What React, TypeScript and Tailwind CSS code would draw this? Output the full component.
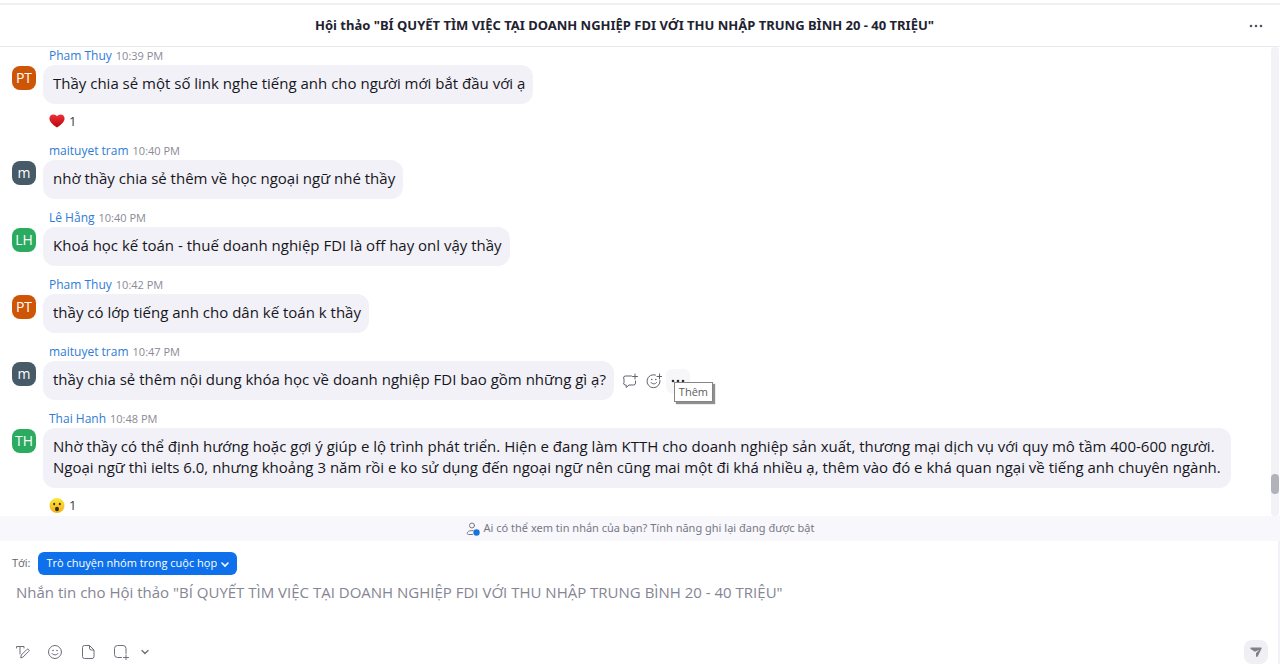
import React from 'react';

type Message = {
  name: string;
  time: string;
  initials: string;
  color: string;
  text: string;
  reaction?: 'heart' | 'wow';
  active?: boolean;
};

const messages: Message[] = [
  {
    name: 'Pham Thuy',
    time: '10:39 PM',
    initials: 'PT',
    color: 'bg-[#cf5506]',
    text: 'Thầy chia sẻ một số link nghe tiếng anh cho người mới bắt đầu với ạ',
    reaction: 'heart',
  },
  {
    name: 'maituyet tram',
    time: '10:40 PM',
    initials: 'm',
    color: 'bg-[#475a68]',
    text: 'nhờ thầy chia sẻ thêm về học ngoại ngữ nhé thầy',
  },
  {
    name: 'Lê Hằng',
    time: '10:40 PM',
    initials: 'LH',
    color: 'bg-[#2bab60]',
    text: 'Khoá học kế toán - thuế doanh nghiệp FDI là off hay onl vậy thầy',
  },
  {
    name: 'Pham Thuy',
    time: '10:42 PM',
    initials: 'PT',
    color: 'bg-[#cf5506]',
    text: 'thầy có lớp tiếng anh cho dân kế toán k thầy',
  },
  {
    name: 'maituyet tram',
    time: '10:47 PM',
    initials: 'm',
    color: 'bg-[#475a68]',
    text: 'thầy chia sẻ thêm nội dung khóa học về doanh nghiệp FDI bao gồm những gì ạ?',
    active: true,
  },
  {
    name: 'Thai Hanh',
    time: '10:48 PM',
    initials: 'TH',
    color: 'bg-[#2bab60]',
    text: 'Nhờ thầy có thể định hướng hoặc gợi ý giúp e lộ trình phát triển. Hiện e đang làm KTTH cho doanh nghiệp sản xuất, thương mại dịch vụ với quy mô tầm 400-600 người. Ngoại ngữ thì ielts 6.0, nhưng khoảng 3 năm rồi e ko sử dụng đến ngoại ngữ nên cũng mai một đi khá nhiều ạ, thêm vào đó e khá quan ngại về tiếng anh chuyên ngành.',
    reaction: 'wow',
  },
];

function Dots() {
  return (
    <svg width="14" height="4" viewBox="0 0 14 4" fill="currentColor">
      <circle cx="2" cy="2" r="1.3" />
      <circle cx="7" cy="2" r="1.3" />
      <circle cx="12" cy="2" r="1.3" />
    </svg>
  );
}

function HeartIcon() {
  return (
    <svg width="16" height="16" viewBox="0 0 16 16">
      <defs>
        <linearGradient id="heart" x1="0" y1="0" x2="0" y2="1">
          <stop offset="0" stopColor="#f0323a" />
          <stop offset="1" stopColor="#b80409" />
        </linearGradient>
      </defs>
      <path
        d="M8 13.500C5.600 11.900.4 8.400.4 4.500.4 2 2.200.4 4.300.4 5.900.4 7.200 1.100 8 2.200 8.800 1.100 10.100.4 11.700.4c2.100 0 3.900 1.600 3.900 4.100 0 3.900-5.200 7.400-7.600 9z"
        fill="url(#heart)"
      />
    </svg>
  );
}

function WowIcon() {
  return (
    <svg width="16" height="16" viewBox="0 0 16 16">
      <defs>
        <linearGradient id="wow" x1="0" y1="0" x2="0" y2="1">
          <stop offset="0" stopColor="#fbe63a" />
          <stop offset="1" stopColor="#f3b01c" />
        </linearGradient>
      </defs>
      <circle cx="8" cy="7.500" r="7.500" fill="url(#wow)" />
      <ellipse cx="5.200" cy="6" rx="1" ry="1.300" fill="#40280c" />
      <ellipse cx="10.800" cy="6" rx="1" ry="1.300" fill="#40280c" />
      <ellipse cx="8" cy="11" rx="2" ry="2.300" fill="#40280c" />
    </svg>
  );
}

function MessageActions() {
  return (
    <div className="flex items-center text-[#62626f]">
      <button aria-label="Trả lời" className="w-6 h-6 flex items-center justify-center">
        <svg width="16" height="16" viewBox="0 0 16 16" fill="none" stroke="currentColor" strokeLinecap="round" strokeLinejoin="round">
          <path d="M9.500 3H3.500A2 2 0 0 0 1.500 5l.5 1v3.500L1.500 10a2 2 0 0 0 2 2h.7v2.500L7 12h4.500a2 2 0 0 0 2-2V8M13 1v5M10.500 3.500h5" />
        </svg>
      </button>
      <button aria-label="Biểu cảm" className="w-6 h-6 flex items-center justify-center">
        <svg width="16" height="16" viewBox="0 0 16 16" fill="none" stroke="currentColor" strokeLinecap="round">
          <path d="M9.500 2A6.500 6.500 0 1 0 14 7.500M13.500 1v5M11 3.500h5M5 9.500c1.200 1.900 4.400 1.900 5.600 0" />
          <circle cx="5.800" cy="6.500" r=".8" fill="currentColor" stroke="none" />
          <circle cx="9.800" cy="6.500" r=".8" fill="currentColor" stroke="none" />
        </svg>
      </button>
      <div className="relative">
        <button aria-label="Thêm" className="w-6 h-6 rounded-md bg-[#f7f7fa] text-[#2c2c34] flex items-center justify-center">
          <Dots />
        </button>
        <span className="absolute left-2 top-[13px] border border-[#858585] bg-white px-1 text-[11px] leading-[18px] text-[#5c5c5c] shadow-[2px_2px_1px_#8f8f8f]">
          Thêm
        </span>
      </div>
    </div>
  );
}

function MessageRow({ message }: { message: Message }) {
  return (
    <article className="flex mb-[10px] last:mb-0">
      <div
        className={`${message.color} w-6 h-6 mt-[19px] mr-[7px] shrink-0 rounded-lg flex items-center justify-center text-sm text-white`}
      >
        {message.initials}
      </div>
      <div className="min-w-0">
        <div className="h-[18px] pl-[6px] flex items-center gap-1">
          <span className="text-xs text-[#2e7cd6]">{message.name}</span>
          <time className="text-[11px] text-[#8a8a96]">{message.time}</time>
        </div>
        <div className="flex items-center gap-1">
          <p className="rounded-xl bg-[#f2f1f7] pt-2 pb-[10px] pl-[10px] pr-2 text-[15px] leading-[21px] text-[#16161d]">
            {message.text}
          </p>
          {message.active && <MessageActions />}
        </div>
        {message.reaction && (
          <button className="mt-2 ml-[6px] h-5 flex items-center gap-1 text-[13px] text-[#3a3a42]">
            {message.reaction === 'heart' ? <HeartIcon /> : <WowIcon />}
            <span>1</span>
          </button>
        )}
      </div>
    </article>
  );
}

function Composer() {
  return (
    <form className="h-[123px] shrink-0 flex flex-col border-r-2 border-[#f1f1f8] pt-[11px]">
      <div className="flex items-center pl-3 text-[11px]">
        <label htmlFor="recipient" className="mr-2 text-[#62626f]">
          Tới:
        </label>
        <div className="relative text-white">
          <select
            id="recipient"
            className="appearance-none h-[23px] rounded-md bg-[#0e71eb] pl-2 pr-5 text-[11px]"
          >
            <option>Trò chuyện nhóm trong cuộc họp</option>
          </select>
          <svg className="absolute right-2 top-[10px] pointer-events-none" width="8" height="6" viewBox="0 0 8 6" fill="none" stroke="currentColor" strokeWidth="1.600" strokeLinecap="round">
            <path d="M1 1l3 3 3-3" />
          </svg>
        </div>
      </div>
      <textarea
        aria-label="Tin nhắn"
        className="flex-1 resize-none pl-4 pt-[7px] text-[15px] leading-[21px] outline-none placeholder:text-[#858593]"
        placeholder={'Nhắn tin cho Hội thảo "BÍ QUYẾT TÌM VIỆC TẠI DOANH NGHIỆP FDI VỚI THU NHẬP TRUNG BÌNH 20 - 40 TRIỆU"'}
      />
      <div className="h-6 shrink-0 flex items-center pl-[14px] pr-[10px] text-[#6e6e7c]">
        <button type="button" aria-label="Định dạng" className="w-4 mr-[17px]">
          <svg width="16" height="16" viewBox="0 0 16 16" fill="none" stroke="currentColor" strokeLinecap="round" strokeLinejoin="round">
            <path d="M2.500 4v-1.500h7.500V4M6 2.500v7.500M6.800 13.500l.5-2.500 5.500-5.500a1.300 1.300 0 0 1 1.900 1.900l-5.500 5.500z" />
          </svg>
        </button>
        <button type="button" aria-label="Biểu tượng" className="w-4 mr-[17px]">
          <svg width="16" height="16" viewBox="0 0 16 16" fill="none" stroke="currentColor" strokeLinecap="round">
            <circle cx="8" cy="8" r="6.500" />
            <path d="M5 9.500c1.200 1.900 4.800 1.900 6 0" />
            <circle cx="6" cy="6.500" r=".8" fill="currentColor" stroke="none" />
            <circle cx="10" cy="6.500" r=".8" fill="currentColor" stroke="none" />
          </svg>
        </button>
        <button type="button" aria-label="Tệp" className="w-4 mr-[17px]">
          <svg width="16" height="16" viewBox="0 0 16 16" fill="none" stroke="currentColor" strokeLinejoin="round">
            <path d="M9.500 1.500H4.500a2 2 0 0 0-2 2v9a2 2 0 0 0 2 2h7.500a2 2 0 0 0 2-2V6zM9.500 1.500V4a2 2 0 0 0 2 2H14" />
          </svg>
        </button>
        <button type="button" aria-label="Chụp màn hình" className="w-4 mr-2">
          <svg width="16" height="16" viewBox="0 0 16 16" fill="none" stroke="currentColor" strokeLinecap="round">
            <path d="M8.500 13.500H4.500a3 3 0 0 1-3-3v-6a3 3 0 0 1 3-3h5.500a3 3 0 0 1 3 3v5M13 11v5M10.500 13.500h5" />
          </svg>
        </button>
        <button type="button" aria-label="Tùy chọn chụp" className="w-4 flex justify-center">
          <svg width="8" height="6" viewBox="0 0 8 6" fill="none" stroke="currentColor" strokeWidth="1.300" strokeLinecap="round">
            <path d="M1 1.500l3 3 3-3" />
          </svg>
        </button>
        <button aria-label="Gửi" className="ml-auto w-6 h-6 rounded-lg bg-[#f0eff4] text-[#808089] flex items-center justify-center">
          <svg width="12" height="12" viewBox="0 0 12 12" fill="currentColor">
            <path d="M1 1.500h10c.6 0 .8.500.6.900L7.700 10.500c-.4.800-1.700.6-1.700-.4V7l3.500-3.300L4.800 5.700 1 3.200C0 2.500.2 1.500 1 1.500z" />
          </svg>
        </button>
      </div>
    </form>
  );
}

function App() {
  return (
    <div className="min-h-screen flex flex-col bg-white font-['Open_Sans',sans-serif]">
      {/* Title bar */}
      <header className="h-[47px] shrink-0 flex items-center pt-[5px] pr-[17px] border-b border-[#e9e9f2] shadow-[inset_0_3px_#ffffff,inset_0_5px_#f0f0f1]">
        <h1 className="flex-1 text-center font-['Noto_Sans',sans-serif] text-[13px] font-bold text-[#222230]">
          Hội thảo "BÍ QUYẾT TÌM VIỆC TẠI DOANH NGHIỆP FDI VỚI THU NHẬP TRUNG BÌNH 20 - 40 TRIỆU"
        </h1>
        <button aria-label="Tùy chọn khác" className="text-[#555562]">
          <Dots />
        </button>
      </header>

      {/* Messages */}
      <main className="flex-1 flex">
        <section className="flex-1 pl-3 pr-10">
          {messages.map((message) => (
            <MessageRow key={message.time + message.name} message={message} />
          ))}
        </section>
        <div className="w-2 mr-px rounded-full bg-[#f2f2f7] flex flex-col justify-end pb-[22px]">
          <div className="h-5 rounded-full bg-[#b2b2bb]" />
        </div>
      </main>

      {/* Privacy notice */}
      <button className="h-[25px] shrink-0 flex items-center justify-center gap-1 bg-[#f7f7fc] font-['Noto_Sans',sans-serif] text-[11px] text-[#777783]">
        <svg width="14" height="14" viewBox="0 0 14 14" fill="none" stroke="currentColor" strokeLinecap="round">
          <circle cx="6" cy="3.500" r="2.500" />
          <path d="M6.500 12.500H2.500c-1.500 0-1.500-1.500-.9-2.300C2.500 8.900 4.500 8.500 7 8.600" />
          <circle cx="10.500" cy="10.500" r="3.200" fill="#1972df" stroke="none" />
        </svg>
        Ai có thể xem tin nhắn của bạn? Tính năng ghi lại đang được bật
      </button>

      <Composer />
    </div>
  );
}

export default App;
